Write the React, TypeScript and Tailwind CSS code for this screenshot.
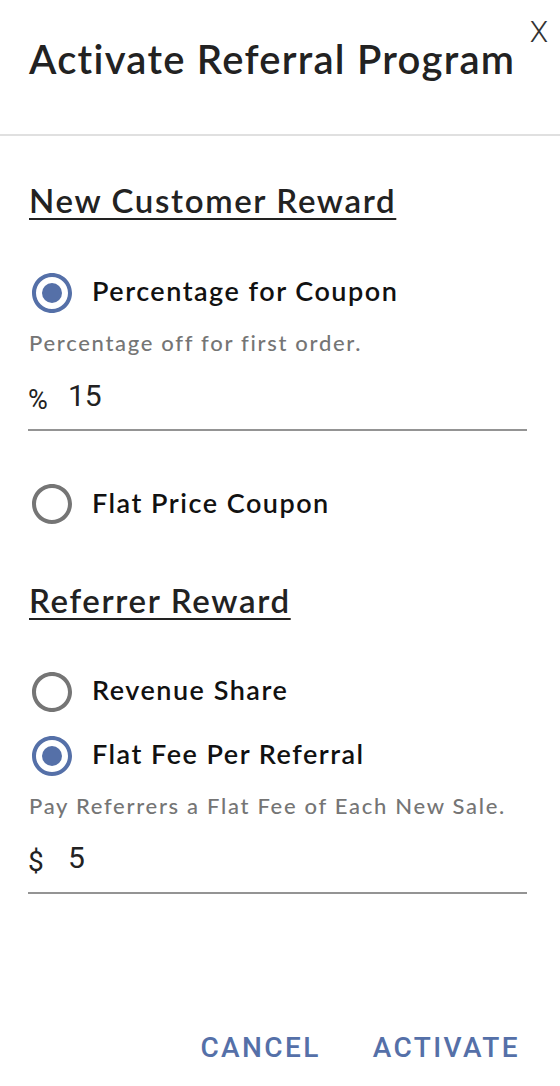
import React from "react";

const BLUE = "#5570a8";

function Radio({ checked }: { checked: boolean }) {
  const c = checked ? BLUE : "#757575";
  return (
    <svg width="48" height="48" viewBox="0 0 24 24" className="shrink-0">
      <path
        fill={c}
        d="M12 2C6.48 2 2 6.48 2 12s4.48 10 10 10 10-4.48 10-10S17.52 2 12 2zm0 18c-4.42 0-8-3.58-8-8s3.58-8 8-8 8 3.58 8 8-3.58 8-8 8z"
      />
      {checked && <circle cx="12" cy="12" r="5" fill={c} />}
    </svg>
  );
}

function RadioRow({ checked, label, className }: { checked: boolean; label: string; className: string }) {
  return (
    <div className={"flex items-center h-[48px] -ml-[1px] " + className}>
      <Radio checked={checked} />
      <span className="ml-[16px] text-[27px] leading-[1.2] font-semibold text-[#111] tracking-[1.5px] relative -top-[1px]">
        {label}
      </span>
    </div>
  );
}

export default function App() {
  return (
    <div
      className="w-[560px] h-[1086px] bg-white relative flex flex-col overflow-hidden"
      style={{ fontFamily: "Lato, 'Noto Sans', sans-serif" }}
    >
      <div className="h-[136px] border-b-2 border-[#e0e0e0] pl-[29px] pt-[35px] shrink-0">
        <h1 className="text-[40px] leading-[1.2] font-semibold text-[#222] tracking-[1.25px]">
          Activate Referral Program
        </h1>
      </div>
      <button
        className="absolute top-[14px] right-[12px] text-[30px] leading-[1.2] text-[#333] font-light"
        style={{ fontFamily: "Roboto, sans-serif" }}
      >
        X
      </button>

      <div className="pl-[29px] pr-[33px] flex flex-col">
        <h2 className="mt-[45px] text-[33px] leading-[1.2] font-semibold text-[#222] tracking-[1.65px] underline underline-offset-[5px] decoration-2 self-start">
          New Customer Reward
        </h2>
        <RadioRow checked label="Percentage for Coupon" className="mt-[48px]" />
        <p className="mt-[13px] text-[22px] leading-[1.2] font-medium text-[#757575] tracking-[1.7px]">
          Percentage off for first order.
        </p>
        <div
          className="mt-[22px] flex items-baseline border-b-2 border-[#949494] pb-[15px] -ml-[1px]"
          style={{ fontFamily: "Roboto, sans-serif" }}
        >
          <span className="text-[27px] leading-[1.2] text-[#222] w-[40px] relative top-[3px]">%</span>
          <span className="text-[30px] leading-[1.2] text-[#222]">15</span>
        </div>
        <RadioRow checked={false} label="Flat Price Coupon" className="mt-[49px]" />

        <h2 className="mt-[53px] text-[33px] leading-[1.2] font-semibold text-[#222] tracking-[1.65px] underline underline-offset-[5px] decoration-2 self-start">
          Referrer Reward
        </h2>
        <RadioRow checked={false} label="Revenue Share" className="mt-[47px]" />
        <RadioRow checked label="Flat Fee Per Referral" className="mt-[16px]" />
        <p className="mt-[13px] text-[22px] leading-[1.2] font-medium text-[#757575] tracking-[1.7px]">
          Pay Referrers a Flat Fee of Each New Sale.
        </p>
        <div
          className="mt-[21px] flex items-baseline border-b-2 border-[#949494] pb-[16px] -ml-[1px]"
          style={{ fontFamily: "Roboto, sans-serif" }}
        >
          <span className="text-[28px] leading-[1.2] text-[#222] w-[40px] relative top-[3px]">$</span>
          <span className="text-[30px] leading-[1.2] text-[#222]">5</span>
        </div>
      </div>

      <div
        className="mt-auto pb-[21px] pr-[40px] flex justify-end gap-[52px]"
        style={{ fontFamily: "Roboto, sans-serif" }}
      >
        <button className="text-[28px] leading-[1.2] font-medium tracking-[2.4px] text-[#5570a8]">CANCEL</button>
        <button className="text-[28px] leading-[1.2] font-medium tracking-[2.4px] text-[#5570a8]">ACTIVATE</button>
      </div>
    </div>
  );
}
